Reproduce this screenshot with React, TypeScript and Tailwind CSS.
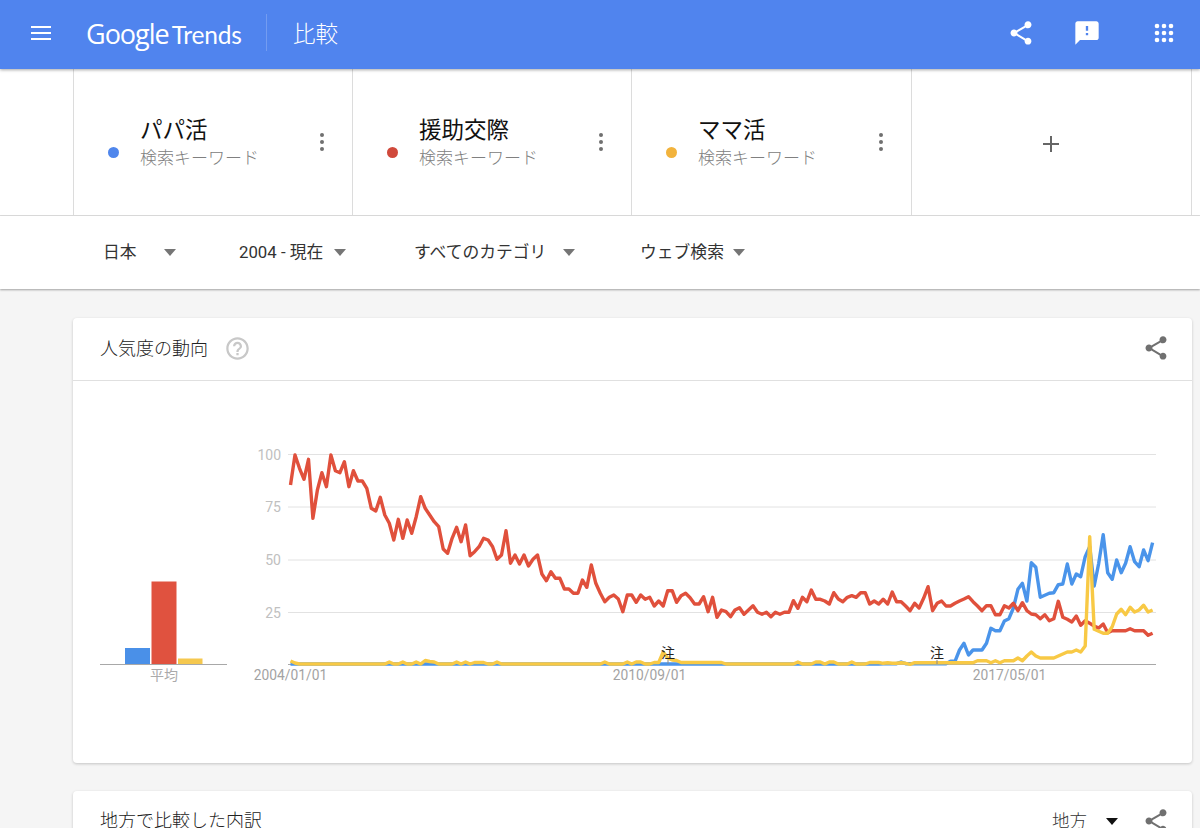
import React from "react";

const FONT = "font-['Roboto','Noto_Sans_CJK_JP',sans-serif]";
const SHARE =
  "M18 16.08c-.76 0-1.44.3-1.96.77L8.91 12.7c.05-.23.09-.46.09-.7s-.04-.47-.09-.7l7.05-4.11c.54.5 1.25.81 2.04.81 1.66 0 3-1.34 3-3s-1.34-3-3-3-3 1.34-3 3c0 .24.04.47.09.7L8.04 9.81C7.5 9.31 6.79 9 6 9c-1.66 0-3 1.34-3 3s1.34 3 3 3c.79 0 1.5-.31 2.04-.81l7.12 4.16c-.05.21-.08.43-.08.65 0 1.61 1.31 2.92 2.92 2.92 1.61 0 2.92-1.31 2.92-2.92s-1.31-2.92-2.92-2.92z";

// 折れ線はスクリーン座標で持つ (x は月ごと)
const fromZoom = (oy: number, ys: number[]) => ys.map((y) => oy + y / 3);

const redY = [
  ...fromZoom(440, [135, 45, 85, 118, 58, 235, 150, 98, 140, 45, 92, 98, 65, 140, 92, 123, 123, 145, 205, 213, 172, 225, 250, 300, 238, 295, 240, 280, 230, 170, 205, 225, 245, 260, 327, 340, 295, 262, 305, 255, 347, 335, 320, 295, 300, 320, 358, 345, 272, 370, 345, 372, 345, 378, 358, 345, 402, 422, 395, 415, 415, 447, 447]),
  ...fromZoom(500, [280, 280, 240, 262, 195, 250, 280, 305, 292, 285, 297, 335, 285, 285, 307, 285, 298, 292, 318, 303, 318, 272, 272, 307, 287, 280, 293, 312, 312, 290, 335, 292, 352, 330, 335, 350, 330, 323, 343, 330, 317, 337, 343, 337, 350, 337, 343, 337, 337, 302, 325, 292, 305, 270, 298, 298, 303, 312, 278, 297, 305, 292, 287, 292, 278, 278, 312, 303, 312]),
  ...fromZoom(520, [238, 252, 216, 245, 245, 258, 272, 250, 264, 235, 200, 272, 250, 243, 258, 258, 250, 243, 237, 230, 245, 258, 272, 257, 257, 284, 284, 257, 264, 250, 272, 248, 272, 282, 284, 296, 284, 302, 296, 244, 292, 298, 306, 288, 316, 302, 310, 318, 324, 312, 338, 332, 332, 332, 332, 326, 332, 332, 332, 346, 340]),
];

const flat = (n: number, y = 664) => Array.from({ length: n }, () => y);

const blueY = [
  ...flat(132),
  ...fromZoom(520, [431, 431, 431, 431, 426, 431, 431, 431, 431, 431, 431, 431, 431, 431, 431, 424, 424, 390, 370, 405, 390, 390, 390, 370, 325, 332, 332, 303, 296, 264, 208, 190, 243, 128, 142, 232, 226, 220, 218, 194, 192, 132, 192, 162, 170, 110, 80, 198, 130, 44, 158, 178, 120, 158, 130, 80, 125, 140, 90, 122, 68]),
];

const yellowEarly = flat(132);
const bumps: Record<number, number> = {
  0: 661, 1: 663, 22: 662, 25: 662, 28: 662, 30: 660.5, 31: 661.5, 32: 662, 37: 662, 39: 662, 41: 662.5, 42: 662.5, 43: 662.5, 46: 662,
  70: 662, 75: 662, 77: 662, 78: 662, 81: 662.5, 82: 662.5, 83: 652, 84: 658, 85: 660, 86: 660.5, 96: 662.5, 113: 662, 117: 662, 118: 662, 120: 662, 121: 662, 125: 662, 129: 662.5, 130: 662.5, 131: 662.5,
};
for (let i = 87; i < 96; i++) bumps[i] = 662.5;
Object.entries(bumps).forEach(([i, y]) => (yellowEarly[Number(i)] = y));

const yellowY = [
  ...yellowEarly,
  ...fromZoom(520, [430, 428, 430, 430, 428, 430, 433, 428, 428, 428, 428, 428, 428, 428, 428, 428, 428, 428, 428, 428, 428, 422, 422, 422, 428, 422, 428, 422, 422, 422, 414, 422, 408, 396, 408, 414, 414, 414, 414, 408, 402, 396, 396, 390, 396, 378, 50, 328, 334, 340, 340, 320, 282, 268, 284, 262, 276, 270, 256, 276, 270]),
];

const toPoints = (ys: number[]) =>
  ys.map((y, i) => `${(290.5 + i * 4.49).toFixed(1)},${y.toFixed(1)}`).join(" ");

const terms = [
  { name: "パパ活", dot: "bg-[#4f86ec]", w: "w-[279px]" },
  { name: "援助交際", dot: "bg-[#d0493b]", w: "w-[279px]" },
  { name: "ママ活", dot: "bg-[#f2b33c]", w: "w-[280px]" },
];

const filters = [
  { label: "日本", cls: "w-[73px] mr-[63px]" },
  { label: "2004 - 現在", cls: "w-[107px] mr-[68px]" },
  { label: "すべてのカテゴリ", cls: "w-[161px] mr-[65px]" },
  { label: "ウェブ検索", cls: "w-[105px]" },
];

function ShareIcon({ className }: { className: string }) {
  return (
    <svg viewBox="0 0 24 24" className={className} fill="currentColor">
      <path d={SHARE} />
    </svg>
  );
}

function Arrow({ className }: { className: string }) {
  return (
    <svg viewBox="0 0 12 7" className={`w-3 h-[7px] ${className}`} fill="currentColor">
      <path d="M0 0h12L6 7z" />
    </svg>
  );
}

function AppBar() {
  return (
    <header className="relative z-10 h-[69px] pb-[4px] bg-[#5084ee] flex items-center shadow-[0_1px_3px_rgba(0,0,0,0.35)] text-white">
      <svg viewBox="0 0 20 14" className="ml-[31px] w-5 h-[14px]" fill="currentColor">
        <path d="M0 0h20v2H0zM0 6h20v2H0zM0 12h20v2H0z" />
      </svg>
      <div className="ml-[35px] mt-[3px] w-[180px] flex items-baseline font-['Open_Sans',sans-serif] text-[27px] leading-none tracking-[-1px]">
        <span>Google</span>
        <span className="ml-[3px] font-['Lato',sans-serif] text-[24.5px] tracking-[-0.2px]">Trends</span>
      </div>
      <div className="w-px h-[37px] bg-white/20" />
      <span className="ml-[26px] text-[22.5px] font-light font-['Noto_Sans_CJK_JP',sans-serif]">比較</span>
      <div className="ml-auto flex items-center">
        <ShareIcon className="w-7 h-7" />
        <svg viewBox="0 0 24 24" className="ml-[38px] w-7 h-7" fill="currentColor">
          <path d="M20 2H4c-1.1 0-1.99.9-1.99 2L2 22l4-4h14c1.1 0 2-.9 2-2V4c0-1.1-.9-2-2-2zm-7 12h-2v-2h2v2zm0-4h-2V6h2v4z" />
        </svg>
        <svg viewBox="0 0 20 20" className="ml-[53px] mr-[26px] w-5 h-5" fill="currentColor">
          {[3, 10, 17].map((y) =>
            [3, 10, 17].map((x) => <circle key={`${x}-${y}`} cx={x} cy={y} r="2.3" />)
          )}
        </svg>
      </div>
    </header>
  );
}

function Terms() {
  return (
    <div className="bg-white h-[147px] pl-[73px] flex border-b border-[#dedede]">
      {terms.map((t) => (
        <div key={t.name} className={`${t.w} border-l border-[#dcdcdc] flex items-start`}>
          <span className={`ml-[34px] mt-[78px] w-[11px] h-[11px] rounded-full ${t.dot}`} />
          <div className="ml-[21px] mt-[45px] flex-1">
            <div className="text-[22.5px] leading-[33px] text-[#111]">{t.name}</div>
            <div className="text-[17px] leading-[23px] text-[#808080] font-light">検索キーワード</div>
          </div>
          <svg viewBox="0 0 4 18" className="mt-[64px] mr-[28px] w-1 h-[18px] text-[#707070]" fill="currentColor">
            <circle cx="2" cy="2" r="2" />
            <circle cx="2" cy="9" r="2" />
            <circle cx="2" cy="16" r="2" />
          </svg>
        </div>
      ))}
      <div className="w-[281px] border-x border-[#dcdcdc] flex items-center justify-center pt-[3px] pr-[1px]">
        <svg viewBox="0 0 16 16" className="w-4 h-4 text-[#666]" fill="currentColor">
          <path d="M7 0h2v7h7v2H9v7H7V9H0V7h7z" />
        </svg>
      </div>
    </div>
  );
}

function Filters() {
  return (
    <div className="relative z-[5] bg-white h-[73px] pl-[103px] flex items-center shadow-[0_1px_2px_rgba(0,0,0,0.35)]">
      {filters.map((f) => (
        <div key={f.label} className={`${f.cls} flex items-center justify-between text-[16.8px] text-[#333]`}>
          <span>{f.label}</span>
          <Arrow className="text-[#757575]" />
        </div>
      ))}
    </div>
  );
}

function BarChart() {
  return (
    <svg viewBox="100 440 127 250" className="w-[127px] h-[250px] shrink-0">
      <rect x="125" y="648" width="25" height="16" fill="#4a90e8" />
      <rect x="151.5" y="581.5" width="25" height="82.5" fill="#e0523f" />
      <rect x="178" y="658.5" width="24.5" height="5.5" fill="#f5c84f" />
      <line x1="100" x2="227" y1="664.5" y2="664.5" stroke="#a8a8a8" strokeWidth="1.2" />
      <text x="164" y="680" textAnchor="middle" fontSize="14" fill="#aaa">平均</text>
    </svg>
  );
}

function LineChart() {
  const grid = [
    { label: "100", y: 454.5 },
    { label: "75", y: 507 },
    { label: "50", y: 560 },
    { label: "25", y: 612.5 },
  ];
  return (
    <svg viewBox="250 440 910 250" className="w-[910px] h-[250px] shrink-0 ml-[23px]">
      {grid.map((g) => (
        <g key={g.label}>
          <line x1="288" x2="1156" y1={g.y} y2={g.y} stroke="#e2e2e2" strokeWidth="1" />
          <text x="281" y={g.y + 5} textAnchor="end" fontSize="14" fill="#c0c0c0">{g.label}</text>
        </g>
      ))}
      <line x1="288" x2="1156" y1="664.5" y2="664.5" stroke="#a8a8a8" strokeWidth="1" />
      <polyline points={toPoints(blueY)} fill="none" stroke="#4a94ea" strokeWidth="3.4" strokeLinejoin="round" />
      <polyline points={toPoints(redY)} fill="none" stroke="#e0503c" strokeWidth="3.4" strokeLinejoin="round" />
      <polyline points={toPoints(yellowY)} fill="none" stroke="#f8c945" strokeWidth="3.4" strokeLinejoin="round" />
      {[668, 937].map((x) => (
        <g key={x}>
          <line x1={x} x2={x} y1="660" y2="664" stroke="#888" />
          <text x={x} y="658" textAnchor="middle" fontSize="14" fill="#222">注</text>
        </g>
      ))}
      <text x="290.5" y="680" textAnchor="middle" fontSize="13.8" fill="#a3a3a3">2004/01/01</text>
      <text x="649.5" y="680" textAnchor="middle" fontSize="13.8" fill="#a3a3a3">2010/09/01</text>
      <text x="1009.5" y="680" textAnchor="middle" fontSize="13.8" fill="#a3a3a3">2017/05/01</text>
    </svg>
  );
}

export default function App() {
  return (
    <div className={`h-[828px] overflow-hidden bg-[#f5f5f5] ${FONT}`}>
      <AppBar />
      <Terms />
      <Filters />
      <main className="pl-[73px] pr-2 pt-[29px] flex flex-col gap-[28px]">
        <section className="bg-white rounded-sm shadow-[0_1px_3px_rgba(0,0,0,0.2)] h-[445px]">
          <div className="h-[63px] border-b border-[#e0e0e0] flex items-center pl-[27px] pr-[22px] pb-[2px]">
            <h2 className="text-[18px] font-light text-[#222]">人気度の動向</h2>
            <svg viewBox="0 0 24 24" className="ml-[16px] w-[27px] h-[27px] text-[#c8c8c8]" fill="currentColor">
              <path d="M11 18h2v-2h-2v2zm1-16C6.48 2 2 6.48 2 12s4.48 10 10 10 10-4.48 10-10S17.52 2 12 2zm0 18c-4.41 0-8-3.59-8-8s3.59-8 8-8 8 3.59 8 8-3.59 8-8 8zm0-14c-2.21 0-4 1.79-4 4h2c0-1.1.9-2 2-2s2 .9 2 2c0 2-3 1.75-3 5h2c0-2.25 3-2.5 3-5 0-2.21-1.79-4-4-4z" />
            </svg>
            <ShareIcon className="ml-auto w-7 h-7 text-[#707070]" />
          </div>
          <div className="flex pl-[27px] pt-[59px]">
            <BarChart />
            <LineChart />
          </div>
        </section>
        <section className="bg-white rounded-sm shadow-[0_1px_3px_rgba(0,0,0,0.2)] h-[120px] flex items-start pl-[27px] pr-[22px] pt-[16px]">
          <h2 className="text-[18px] font-light text-[#222]">地方で比較した内訳</h2>
          <div className="ml-auto flex items-center">
            <span className="text-[17.5px] font-light text-[#333]">地方</span>
            <Arrow className="ml-[19px] text-[#111]" />
            <ShareIcon className="ml-[24px] w-7 h-7 text-[#707070]" />
          </div>
        </section>
      </main>
    </div>
  );
}
